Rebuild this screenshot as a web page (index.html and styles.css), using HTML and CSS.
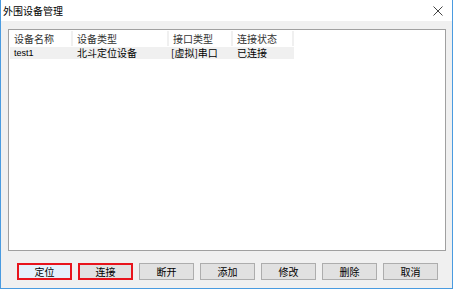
FILE: index.html
```html
<!DOCTYPE html>
<html lang="zh-CN">
<head>
    <meta charset="UTF-8">
    <title>外围设备管理</title>
    <link rel="stylesheet" href="styles.css">
</head>
<body>
    <div class="window">
        <div class="titlebar">
            <span class="title">外围设备管理</span>
            <span class="close">
                <svg width="10" height="10" viewBox="0 0 10 10"><path d="M0.5 0.5 L9.5 9.5 M9.5 0.5 L0.5 9.5" stroke="#444" stroke-width="1"/></svg>
            </span>
        </div>
        <div class="content">
            <div class="listbox">
                <div class="row header">
                    <div class="cell c1">设备名称</div>
                    <div class="cell c2">设备类型</div>
                    <div class="cell c3">接口类型</div>
                    <div class="cell c4">连接状态</div>
                </div>
                <div class="row item">
                    <div class="cell c1 latin">test1</div>
                    <div class="cell c2">北斗定位设备</div>
                    <div class="cell c3">[虚拟]串口</div>
                    <div class="cell c4">已连接</div>
                </div>
            </div>
            <div class="buttons">
                <button class="btn focus">定位</button>
                <button class="btn marked">连接</button>
                <button class="btn">断开</button>
                <button class="btn">添加</button>
                <button class="btn">修改</button>
                <button class="btn">删除</button>
                <button class="btn">取消</button>
            </div>
        </div>
    </div>
</body>
</html>
```
FILE: styles.css
```css
html, body {
    margin: 0;
    padding: 0;
}
body {
    font-family: "Noto Sans CJK SC", "Liberation Sans", sans-serif;
    font-size: 10px;
    color: #000;
    background: #fff;
}
.window {
    width: 453px;
    height: 289px;
    box-sizing: border-box;
    border: 1px solid #4a9be0;
    border-top: none;
    display: flex;
    flex-direction: column;
    background: #f0f0f0;
}
.titlebar {
    height: 21px;
    background: #fff;
    display: flex;
    align-items: center;
    justify-content: space-between;
    padding: 0 9px 0 2px;
}
.title {
    font-size: 10px;
    line-height: 21px;
}
.close {
    display: flex;
    align-items: center;
}
.content {
    flex: 1;
    padding: 8px 6px 0 7px;
    display: flex;
    flex-direction: column;
}
.listbox {
    height: 222px;
    box-sizing: border-box;
    border: 1px solid #a0a0a0;
    background: #fff;
    padding: 1px 0 0 1px;
}
.row {
    display: flex;
    width: 284px;
}
.header .cell {
    height: 15px;
    line-height: 15px;
    border-right: 2px solid #f0f0f0;
    color: #333;
}
.item {
    background: #f0f0f0;
    height: 12px;
    margin-top: 1px;
}
.item .cell {
    height: 12px;
    line-height: 12px;
    border-right: 2px solid transparent;
}
.cell {
    box-sizing: border-box;
    padding-left: 4px;
    white-space: nowrap;
}
.c1 { width: 63px; }
.c2 { width: 96px; }
.c3 { width: 64px; }
.c4 { width: 61px; }
.item .c3 { padding-left: 2px; }
.latin {
    font-family: "Liberation Sans", sans-serif;
    font-size: 9px;
}
.buttons {
    display: flex;
    gap: 6px;
    padding: 12px 0 0 9px;
}
.btn {
    width: 55px;
    height: 17px;
    padding: 0;
    box-sizing: border-box;
    border: 1px solid #adadad;
    background: #e1e1e1;
    font-family: "Noto Sans CJK SC", sans-serif;
    font-size: 10px;
    line-height: 14px;
    color: #000;
}
.btn.focus {
    border: 2px solid #e8141c;
    background: #e5f1fb;
}
.btn.marked {
    border: 2px solid #e8141c;
}
```
